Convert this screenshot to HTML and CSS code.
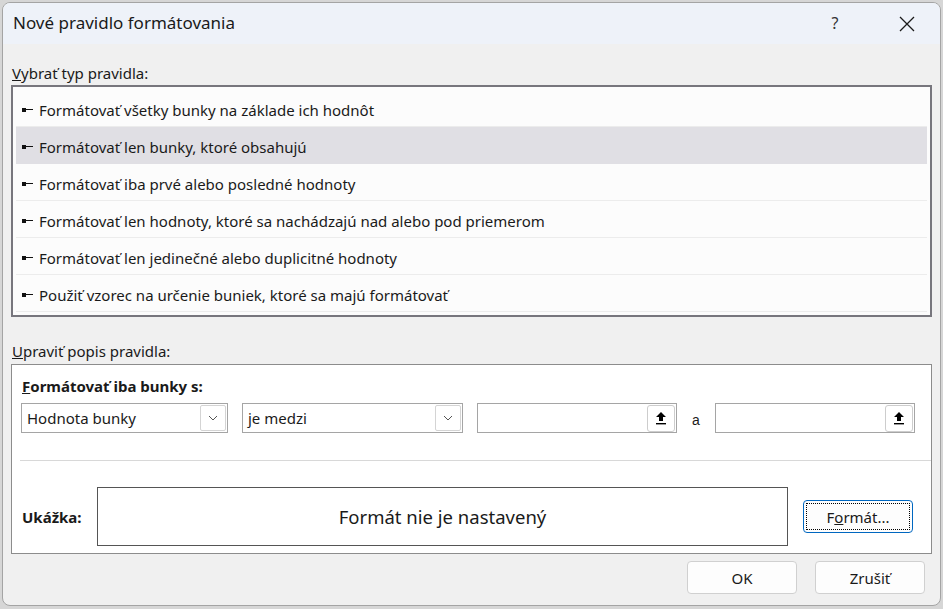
FILE: index.html
```html
<!DOCTYPE html>
<html>
<head>
    <meta charset="UTF-8">
    <title>Nové pravidlo formátovania</title>
    <link rel="stylesheet" href="styles.css">
</head>
<body>
    <div class="dialog">
        <div class="titlebar">
            <span class="title">Nové pravidlo formátovania</span>
            <span class="help">?</span>
            <span class="close">
                <svg width="16" height="16" viewBox="0 0 16 16"><path d="M1 1 L15 15 M15 1 L1 15" stroke="#1a1a1a" stroke-width="1.3" fill="none"/></svg>
            </span>
        </div>

        <div class="content">
            <div class="label"><u>V</u>ybrať typ pravidla:</div>
            <ul class="rule-list">
                <li><i class="tack"></i>Formátovať všetky bunky na základe ich hodnôt</li>
                <li class="selected"><i class="tack"></i>Formátovať len bunky, ktoré obsahujú</li>
                <li><i class="tack"></i>Formátovať iba prvé alebo posledné hodnoty</li>
                <li><i class="tack"></i>Formátovať len hodnoty, ktoré sa nachádzajú nad alebo pod priemerom</li>
                <li><i class="tack"></i>Formátovať len jedinečné alebo duplicitné hodnoty</li>
                <li><i class="tack"></i>Použiť vzorec na určenie buniek, ktoré sa majú formátovať</li>
            </ul>

            <div class="label label-edit"><u>U</u>praviť popis pravidla:</div>
            <div class="group">
                <div class="group-title"><u>F</u>ormátovať iba bunky s:</div>
                <div class="criteria">
                    <div class="combo combo-cell">
                        <span class="combo-text">Hodnota bunky</span>
                        <span class="chevron"><svg width="10" height="6" viewBox="0 0 10 6"><path d="M1 1 L5 5 L9 1" stroke="#555" stroke-width="1" fill="none"/></svg></span>
                    </div>
                    <div class="combo combo-op">
                        <span class="combo-text">je medzi</span>
                        <span class="chevron"><svg width="10" height="6" viewBox="0 0 10 6"><path d="M1 1 L5 5 L9 1" stroke="#555" stroke-width="1" fill="none"/></svg></span>
                    </div>
                    <div class="ref-input">
                        <span class="ref-btn"><svg width="12" height="14" viewBox="0 0 12 14"><path d="M6 1 L11 6 L8 6 L8 10 L4 10 L4 6 L1 6 Z" fill="#000"/><rect x="1" y="12" width="10" height="1.4" fill="#000"/></svg></span>
                    </div>
                    <span class="and">a</span>
                    <div class="ref-input">
                        <span class="ref-btn"><svg width="12" height="14" viewBox="0 0 12 14"><path d="M6 1 L11 6 L8 6 L8 10 L4 10 L4 6 L1 6 Z" fill="#000"/><rect x="1" y="12" width="10" height="1.4" fill="#000"/></svg></span>
                    </div>
                </div>
                <div class="divider"></div>
                <div class="preview-row">
                    <span class="preview-label">Ukážka:</span>
                    <div class="preview-box">Formát nie je nastavený</div>
                    <button class="btn btn-format"><span class="focus">F<u>o</u>rmát...</span></button>
                </div>
            </div>

            <div class="actions">
                <button class="btn">OK</button>
                <button class="btn">Zrušiť</button>
            </div>
        </div>
    </div>
</body>
</html>
```

FILE: styles.css
```css
body {
    margin: 0;
    padding: 2px;
    background: #d6d6d6;
    font-family: "Noto Sans", "Open Sans", sans-serif;
    font-size: 15px;
    color: #1a1a1a;
}

.dialog {
    width: 939px;
    height: 604px;
    box-sizing: border-box;
    border: 1px solid #a4a4a4;
    border-radius: 8px;
    background: #f0f0f0;
    overflow: hidden;
    display: flex;
    flex-direction: column;
}

/* title bar */
.titlebar {
    height: 41px;
    background: #eef2f9;
    display: flex;
    align-items: center;
    padding-left: 10px;
}

.title {
    font-size: 17px;
    flex: 1;
    margin-top: -2px;
}

.help {
    font-size: 16px;
    width: 20px;
    text-align: center;
    margin-right: 54px;
    color: #333;
    margin-top: -2px;
}

.close {
    display: flex;
    width: 16px;
    margin-right: 25px;
}

.content {
    padding: 19px 8px 0 8px;
    display: flex;
    flex-direction: column;
}

.label {
    height: 20px;
    line-height: 20px;
    margin-left: 1px;
}

/* rule type list */
.rule-list {
    list-style: none;
    margin: 2px 0 0 0;
    padding: 3px;
    height: 232px;
    box-sizing: border-box;
    border: 2px solid #77767d;
    background: #fcfcfc;
}

.rule-list li {
    height: 36px;
    box-sizing: border-box;
    padding: 3px 0 0 6px;
    border-bottom: 1px solid #ececec;
    display: flex;
    align-items: center;
    height: 37px;
}

.rule-list li.selected {
    background: #e0dfe4;
    border-bottom-color: #e0dfe4;
}

.tack {
    display: inline-block;
    width: 11px;
    height: 4px;
    margin-right: 6px;
    background:
        linear-gradient(#111, #111) 0 0 / 4px 4px no-repeat,
        linear-gradient(#111, #111) 0 1.5px / 11px 1.2px no-repeat;
}

.label-edit {
    margin-top: 24px;
}

/* rule description box */
.group {
    margin-top: 3px;
    height: 190px;
    box-sizing: border-box;
    border: 1px solid #8c8c8c;
    background: #fff;
    padding: 11px 0 0 9px;
}

.group-title {
    font-weight: bold;
    height: 20px;
    line-height: 20px;
    margin-left: 1px;
}

.criteria {
    margin-top: 7px;
    display: flex;
    align-items: center;
    height: 30px;
}

.combo {
    height: 30px;
    box-sizing: border-box;
    border: 1px solid #a5a5a5;
    display: flex;
    align-items: center;
    justify-content: space-between;
    padding: 0 1px 0 5px;
}

.combo-cell {
    width: 207px;
}

.combo-op {
    width: 221px;
    margin-left: 14px;
}

.chevron {
    width: 26px;
    height: 26px;
    box-sizing: border-box;
    border: 1px solid #d4d4d4;
    border-radius: 2px;
    display: flex;
    align-items: center;
    justify-content: center;
}

.ref-input {
    width: 200px;
    height: 30px;
    box-sizing: border-box;
    border: 1px solid #a5a5a5;
    margin-left: 14px;
    display: flex;
    justify-content: flex-end;
    align-items: center;
    padding-right: 1px;
}

.ref-input + .and + .ref-input {
    margin-left: 0;
}

.ref-btn {
    width: 28px;
    height: 27px;
    box-sizing: border-box;
    border: 1px solid #cdcdcd;
    border-radius: 3px;
    display: flex;
    align-items: center;
    justify-content: center;
}

.and {
    width: 38px;
    text-align: center;
    font-family: "Liberation Sans", sans-serif;
    font-size: 14px;
    padding-top: 4px;
}

.divider {
    margin-top: 27px;
    margin-left: -1px;
    height: 1px;
    background: #d8d8d8;
}

.preview-row {
    margin-top: 26px;
    display: flex;
    align-items: center;
}

.preview-label {
    width: 75px;
    font-weight: bold;
    margin-left: 1px;
}

.preview-box {
    width: 691px;
    height: 59px;
    box-sizing: border-box;
    border: 1px solid #555;
    display: flex;
    align-items: center;
    justify-content: center;
    font-size: 18.5px;
}

/* buttons */
.btn {
    width: 110px;
    height: 33px;
    box-sizing: border-box;
    border: 1px solid #d0d0d0;
    border-radius: 4px;
    background: #fdfdfd;
    font-family: inherit;
    font-size: 15px;
    color: #1a1a1a;
    padding: 0;
}

.btn-format {
    margin-left: 15px;
    border-color: #0067c0;
    padding: 2px;
}

.focus {
    display: flex;
    height: 100%;
    align-items: center;
    justify-content: center;
    border: 1px dotted #000;
    box-sizing: border-box;
}

.actions {
    margin-top: 7px;
    display: flex;
    justify-content: flex-end;
    gap: 18px;
    padding-right: 7px;
}
```
